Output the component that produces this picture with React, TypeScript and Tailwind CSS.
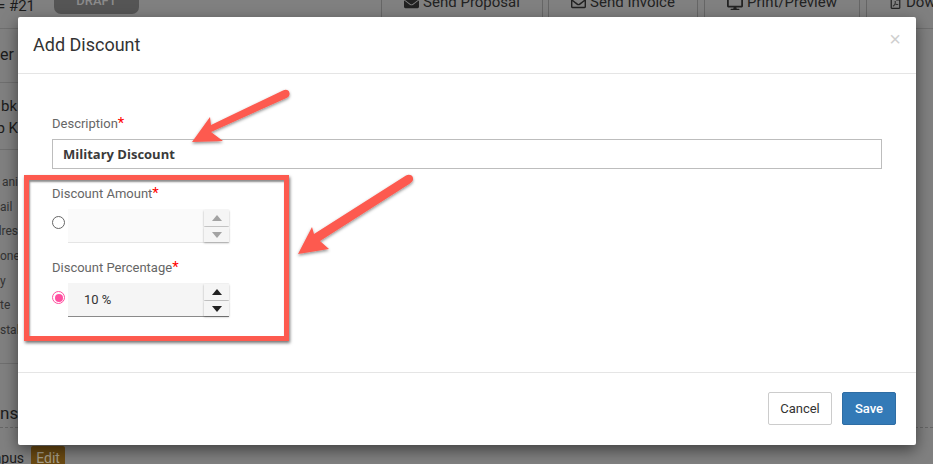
import React from 'react';
import { FaDesktop, FaEnvelope, FaRegEnvelope, FaRegFilePdf } from 'react-icons/fa';

function Spinner({ disabled }: { disabled?: boolean }) {
  const color = disabled ? 'border-[#a3a3a3]' : 'border-[#222]';
  return (
    <div className="flex h-full w-[25px] shrink-0 flex-col justify-between pt-px">
      <div className="flex h-[16px] items-center justify-center bg-[#f5f5f5] shadow-[0_1px_2px_rgba(0,0,0,0.3)]">
        <div className={`h-0 w-0 border-x-[5px] border-b-[6px] border-x-transparent ${color}`}></div>
      </div>
      <div className="flex h-[15px] items-center justify-center bg-[#f5f5f5] shadow-[0_1px_2px_rgba(0,0,0,0.3)]">
        <div className={`h-0 w-0 border-x-[5px] border-t-[6px] border-x-transparent ${color}`}></div>
      </div>
    </div>
  );
}

function Label({ text }: { text: string }) {
  return (
    <div className="h-[16px] text-[13px] leading-[18px] text-[#666]">
      {text}
      <span className="text-[15px] leading-none text-[#f00]">*</span>
    </div>
  );
}

function TopButton({ icon, text, width }: { icon: React.ReactNode; text: string; width: string }) {
  return (
    <div className={`flex h-[17px] ${width} shrink-0 justify-center gap-[4px] border-x border-[#666] text-[15px] leading-[15px] text-[#222]`}>
      <div className="mt-[-5px] flex h-[15px] items-center gap-[4px]">
        {icon}
        <span>{text}</span>
      </div>
    </div>
  );
}

function SideLabel({ text }: { text: string }) {
  return <div className="h-[24.7px] text-right text-[12px] leading-[24px] text-[#333]">{text}</div>;
}

export default function App() {
  return (
    <div className="relative h-[464px] w-[933px] overflow-hidden bg-[#808080] font-['Roboto',sans-serif]">
      {/* page behind the modal */}
      <div className="flex h-[29px] items-start overflow-hidden border-b border-[#6f6f6f]">
        <div className="mt-[-3px] ml-[-3px] w-[57px] shrink-0 text-[15px] leading-[18px] whitespace-nowrap text-[#1c1c1c]">= #21</div>
        <div className="flex h-[14px] w-[85px] shrink-0 justify-center overflow-hidden rounded-b-[7px] bg-[#555]">
          <div className="mt-[-6px] text-[13px] leading-[14px] font-medium text-[#8b8b8b]">DRAFT</div>
        </div>
        <div className="ml-[242px] flex">
          <TopButton width="w-[162px]" text="Send Proposal" icon={<FaEnvelope size={15} />} />
          <div className="w-[5px] shrink-0"></div>
          <TopButton width="w-[150px]" text="Send Invoice" icon={<FaRegEnvelope size={15} />} />
          <div className="w-[6px] shrink-0"></div>
          <TopButton width="w-[156px]" text="Print/Preview" icon={<FaDesktop size={16} />} />
          <div className="w-[6px] shrink-0"></div>
          <div className="flex h-[17px] w-[67px] shrink-0 gap-[4px] border-l border-[#666] pl-[22px] text-[15px] leading-[15px] text-[#222]">
            <div className="mt-[-5px] flex h-[15px] items-center gap-[4px]">
              <FaRegFilePdf size={13} className="shrink-0" />
              <span>Dow</span>
            </div>
          </div>
        </div>
      </div>
      <div className="w-[18px] text-[#1c1c1c]">
        <div className="flex h-[54px] items-center border-b border-[#6f6f6f] pr-[4px] pb-px">
          <div className="ml-auto text-[16px] leading-[24px]">er</div>
        </div>
        <div className="h-[67px] border-b border-[#6f6f6f] pt-[12px] text-right text-[15px] leading-[22px]">
          <div className="ml-[-4px] pr-px">bk</div>
          <div className="ml-[-4px] pr-0 whitespace-nowrap">b K</div>
        </div>
        <div className="h-[214px] border-b border-[#6f6f6f] pt-[20px]">
          <SideLabel text="ani" />
          <div className="pr-[6px]"><SideLabel text="ail" /></div>
          <div className="ml-[-8px]"><SideLabel text="dres" /></div>
          <SideLabel text="one" />
          <div className="pr-[15px]"><SideLabel text="y" /></div>
          <div className="pr-[8px]"><SideLabel text="te" /></div>
          <SideLabel text="stal" />
        </div>
        <div className="mt-[37px] h-[25px] text-[17px] leading-[24px]">ns</div>
      </div>
      <div className="mt-[1px] w-full border-t border-dashed border-[#666]"></div>
      <div className="mt-[18px] ml-[-11px] flex items-start gap-[7px] text-[14px] leading-[18px] text-[#1c1c1c]">
        <span className="pt-[3px]">mpus</span>
        <span className="w-[34px] rounded-t-[2px] bg-[#6b4a12] pt-[3px] text-center text-[14px] text-[#a8a08c]">Edit</span>
      </div>

      {/* modal */}
      <div className="absolute top-[17px] left-[18px] flex h-[428px] w-[898px] flex-col rounded-[2px] bg-white shadow-[0_5px_15px_rgba(0,0,0,0.5)]">
        <div className="flex h-[57px] shrink-0 items-start justify-between border-b border-[#e5e5e5] px-[15px]">
          <div className="mt-[17px] text-[18px] leading-[22px] text-[#333]">Add Discount</div>
          <div className="mt-[12px] font-['Liberation_Sans',sans-serif] text-[20px] leading-[20px] text-[#cfcfcf]">×</div>
        </div>
        <div className="flex flex-1 flex-col pt-[41px] pr-[34px] pl-[34px]">
          <Label text="Description" />
          <div className="mt-[8px] flex h-[30px] items-center border border-[#bdbdbd] px-[10px] pt-px font-['Open_Sans',sans-serif] text-[13px] font-bold text-[#3a3a3a]">
            Military Discount
          </div>
          <div className="mt-[16px]"><Label text="Discount Amount" /></div>
          <div className="mt-[8px] flex h-[34px] items-center">
            <div className="mb-[7px] h-[13px] w-[13px] rounded-full border border-[#666] bg-white"></div>
            <div className="ml-[3px] flex h-full w-[161px] border-b border-[#e5e5e5] bg-[#fafafa]">
              <div className="flex-1"></div>
              <Spinner disabled />
            </div>
          </div>
          <div className="mt-[16px]"><Label text="Discount Percentage" /></div>
          <div className="mt-[8px] flex h-[34px] items-center">
            <div className="mb-[5px] flex h-[13px] w-[13px] items-center justify-center rounded-full border border-[#ff4fa0]">
              <div className="h-[8px] w-[8px] rounded-full bg-[#ff4fa0]"></div>
            </div>
            <div className="ml-[3px] flex h-full w-[161px] border-b border-[#8a8a8a] bg-[#f5f5f5]">
              <div className="flex-1 pt-[8px] pl-[16px] text-[13px] leading-[18px] text-[#333]">10 %</div>
              <Spinner />
            </div>
          </div>
        </div>
        <div className="flex h-[73px] shrink-0 items-start justify-end gap-[10px] border-t border-[#e5e5e5] pt-[19px] pr-[20px]">
          <div className="flex h-[33px] w-[64px] items-center justify-center rounded-[2px] border border-[#ccc] bg-white text-[13px] text-[#333]">Cancel</div>
          <div className="flex h-[33px] w-[54px] items-center justify-center rounded-[2px] border border-[#2e6da4] bg-[#337ab7] text-[13px] font-medium text-white">Save</div>
        </div>
      </div>

      {/* annotations */}
      <div className="absolute top-[175px] left-[24px] h-[166px] w-[265px] border-[5px] border-[#fd5a4f] shadow-[1px_2px_3px_rgba(0,0,0,0.55),inset_1px_2px_2px_rgba(0,0,0,0.45)]"></div>
      <svg className="absolute top-0 left-0" width="933" height="464" viewBox="0 0 933 464" fill="none">
        <defs>
          <filter id="arrowShadow" x="-20%" y="-20%" width="140%" height="140%">
            <feDropShadow dx="0" dy="1.5" stdDeviation="1.5" floodColor="#000" floodOpacity="0.45" />
          </filter>
        </defs>
        <g filter="url(#arrowShadow)" fill="#fd5a4f">
          <path d="M283 90.5 C286 89 289 90 289.500 93 C290 95.500 288.500 97 286.500 98 L211 132 L223 141 L192 142 L210 117 L211 125 Z" />
          <path d="M406 175.500 C409 174 412.500 175 413 178 C413.500 180.500 412 182 410 183.500 L320 241 L329 249 L298 254 L312 227 L314 234 Z" />
        </g>
      </svg>
    </div>
  );
}
